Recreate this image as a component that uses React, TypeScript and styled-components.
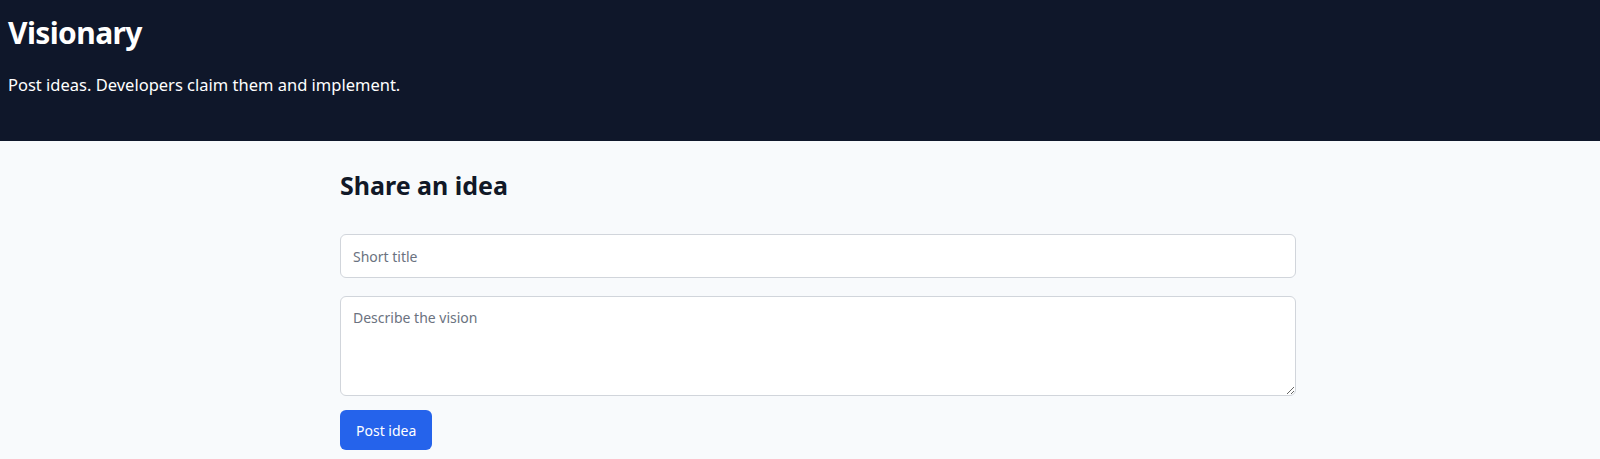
import styled, { createGlobalStyle } from "styled-components";

const GlobalStyle = createGlobalStyle`
  * { box-sizing: border-box; }
  body {
    margin: 0;
    background: #f8fafc;
    font-family: "Noto Sans", "Open Sans", sans-serif;
    color: #0f172a;
  }
`;

const Styles = {
  Header: styled.header`
    height: 141px;
    padding: 13px 8px 0;
    background-color: #0f172a;
    color: white;
  `,
  Title: styled.h1`
    margin: 0;
    font-size: 30px;
    line-height: 40px;
    font-weight: 700;
    letter-spacing: -0.6px;
  `,
  Tagline: styled.p`
    margin: 20px 0 0;
    font-size: 16.5px;
    line-height: 24px;
  `,
  Main: styled.main`
    width: 956px;
    margin-left: calc(50% - 460px);
    padding-top: 28px;
  `,
  Heading: styled.h2`
    margin: 0 0 33px;
    font-size: 25px;
    line-height: 32px;
    font-weight: 700;
    color: #111827;
  `,
  Form: styled.form`
    display: flex;
    flex-direction: column;
    align-items: flex-start;
  `,
  Field: styled.input`
    width: 100%;
    height: 44px;
    padding: 0 12px;
    border: 1px solid #d1d5db;
    border-radius: 6px;
    background: white;
    font: inherit;
    font-size: 14px;
    &::placeholder { color: #6b7280; }
  `,
  Area: styled.textarea`
    width: 100%;
    height: 100px;
    margin-top: 18px;
    padding: 11px 12px;
    border: 1px solid #d1d5db;
    border-radius: 6px;
    background: white;
    font: inherit;
    font-size: 14px;
    &::placeholder { color: #6b7280; }
  `,
  Button: styled.button`
    margin-top: 14px;
    height: 40px;
    padding: 0 16px;
    border: none;
    border-radius: 6px;
    background-color: #2563eb;
    color: white;
    font: inherit;
    font-size: 14px;
  `,
};

export default function App() {
  return (
    <>
      <GlobalStyle />
      <Styles.Header>
        <Styles.Title>Visionary</Styles.Title>
        <Styles.Tagline>Post ideas. Developers claim them and implement.</Styles.Tagline>
      </Styles.Header>
      <Styles.Main>
        <Styles.Heading>Share an idea</Styles.Heading>
        <Styles.Form onSubmit={(e) => e.preventDefault()}>
          <Styles.Field placeholder="Short title" />
          <Styles.Area placeholder="Describe the vision" />
          <Styles.Button type="submit">Post idea</Styles.Button>
        </Styles.Form>
      </Styles.Main>
    </>
  );
}
